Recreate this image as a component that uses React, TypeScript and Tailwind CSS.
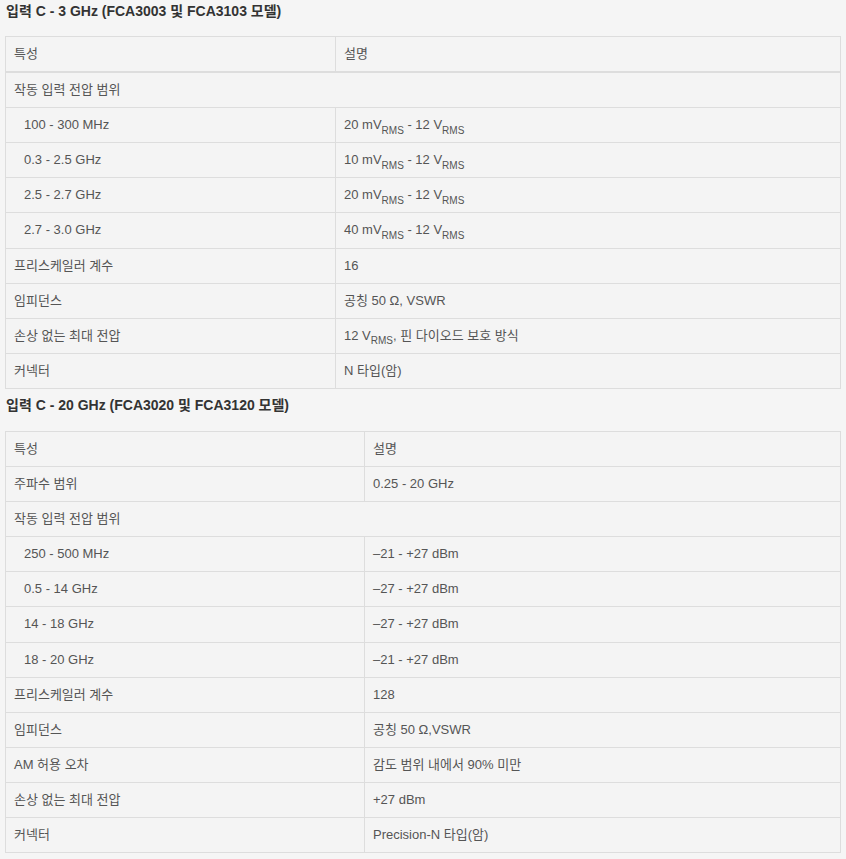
import React from "react";

const RMS = () => <sub className="text-[10px] align-[-2px] leading-none">RMS</sub>;

type Row = { k: React.ReactNode; v?: React.ReactNode; indent?: boolean; span?: boolean };

const t1: Row[] = [
  { k: "작동 입력 전압 범위", span: true },
  { k: "100 - 300 MHz", indent: true, v: <>20 mV<RMS /> - 12 V<RMS /></> },
  { k: "0.3 - 2.5 GHz", indent: true, v: <>10 mV<RMS /> - 12 V<RMS /></> },
  { k: "2.5 - 2.7 GHz", indent: true, v: <>20 mV<RMS /> - 12 V<RMS /></> },
  { k: "2.7 - 3.0 GHz", indent: true, v: <>40 mV<RMS /> - 12 V<RMS /></> },
  { k: "프리스케일러 계수", v: "16" },
  { k: "임피던스", v: "공칭 50 Ω, VSWR" },
  { k: "손상 없는 최대 전압", v: <>12 V<RMS />, 핀 다이오드 보호 방식</> },
  { k: "커넥터", v: "N 타입(암)" },
];

const t2: Row[] = [
  { k: "주파수 범위", v: "0.25 - 20 GHz" },
  { k: "작동 입력 전압 범위", span: true },
  { k: "250 - 500 MHz", indent: true, v: "–21 - +27 dBm" },
  { k: "0.5 - 14 GHz", indent: true, v: "–27 - +27 dBm" },
  { k: "14 - 18 GHz", indent: true, v: "–27 - +27 dBm" },
  { k: "18 - 20 GHz", indent: true, v: "–21 - +27 dBm" },
  { k: "프리스케일러 계수", v: "128" },
  { k: "임피던스", v: "공칭 50 Ω,VSWR" },
  { k: "AM 허용 오차", v: "감도 범위 내에서 90% 미만" },
  { k: "손상 없는 최대 전압", v: "+27 dBm" },
  { k: "커넥터", v: "Precision-N 타입(암)" },
];

function Table({ rows, firstCol, thickHead }: { rows: Row[]; firstCol: string; thickHead: boolean }) {
  const cell = "border border-[#dddddd] px-2 py-2 leading-[18.1px] align-top";
  return (
    <table className="w-[836px] border-collapse bg-[#f4f4f4] text-[13px] text-[#555555] table-fixed">
      <colgroup>
        <col className={firstCol} />
        <col />
      </colgroup>
      <thead>
        <tr>
          <th className={`${cell} text-left font-normal ${thickHead ? "border-b-2" : ""}`}>특성</th>
          <th className={`${cell} text-left font-normal ${thickHead ? "border-b-2" : ""}`}>설명</th>
        </tr>
      </thead>
      <tbody>
        {rows.map((r, i) =>
          r.span ? (
            <tr key={i}>
              <td colSpan={2} className={cell}>{r.k}</td>
            </tr>
          ) : (
            <tr key={i}>
              <td className={`${cell} ${r.indent ? "pl-[18px]" : ""}`}>{r.k}</td>
              <td className={cell}>{r.v}</td>
            </tr>
          )
        )}
      </tbody>
    </table>
  );
}

export default function App() {
  return (
    <div
      className="min-h-[859px] w-[846px] bg-[#f5f5f5] pl-[5px] pt-[1px]"
      style={{ fontFamily: '"Liberation Sans", Arial, "Noto Sans CJK KR", sans-serif' }}
    >
      <h3 className="ml-px text-[14px] font-bold leading-[20px] text-[#333333] mb-[15px]">
        입력 C - 3 GHz (FCA3003 및 FCA3103 모델)
      </h3>
      <Table rows={t1} firstCol="w-[330px]" thickHead />
      <h3 className="ml-px mt-[6px] text-[14px] font-bold leading-[20px] text-[#333333] mb-[16px]">
        입력 C - 20 GHz (FCA3020 및 FCA3120 모델)
      </h3>
      <Table rows={t2} firstCol="w-[359px]" thickHead={false} />
    </div>
  );
}
